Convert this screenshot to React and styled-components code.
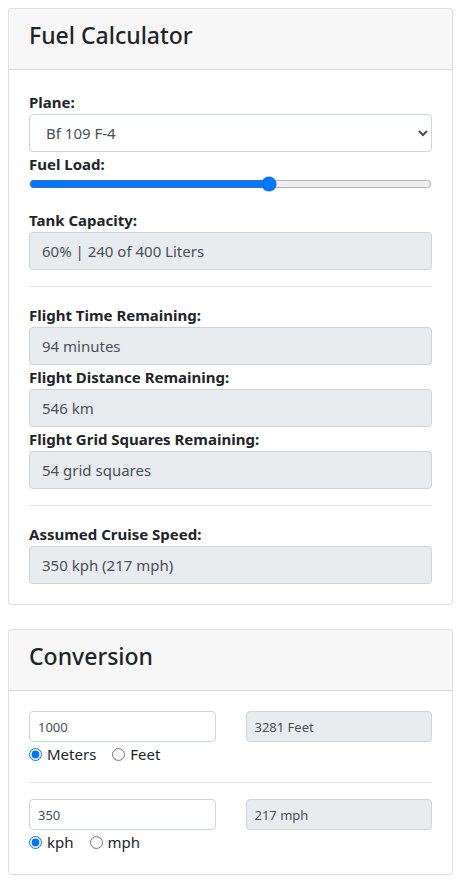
import React, { useState } from 'react';
import styled, { createGlobalStyle } from 'styled-components';

const GlobalStyle = createGlobalStyle`
  * { box-sizing: border-box; }
  body {
    margin: 0;
    background: #fff;
    color: #212529;
    font-family: "Noto Sans", "Open Sans", sans-serif;
    font-size: 15px;
    line-height: 24px;
  }
`;

const Page = styled.div`
  padding: 8px 13px 8px 8px;
`;

const Card = styled.div`
  border: 1px solid rgba(0, 0, 0, 0.125);
  border-radius: 4px;
  background: #fff;
  margin-bottom: 24px;
  &:last-child { margin-bottom: 0; }
`;

const CardHeader = styled.div`
  background: rgba(0, 0, 0, 0.03);
  border-bottom: 1px solid rgba(0, 0, 0, 0.125);
  padding: 12px 20px;
`;

const Title = styled.h4`
  margin: 0 0 7px;
  font-size: 23px;
  font-weight: 500;
  line-height: 29px;
`;

const CardBody = styled.div`
  padding: 20px;
`;

const Label = styled.label`
  display: block;
  font-weight: 700;
  line-height: 24px;
`;

const Select = styled.select`
  display: block;
  width: 100%;
  height: 38px;
  padding: 6px 12px;
  font: inherit;
  color: #495057;
  background: #fff;
  border: 1px solid #ced4da;
  border-radius: 4px;
`;

const Range = styled.input`
  display: block;
  width: 100%;
  margin: 0 0 16px;
  height: 16px;
  accent-color: #0075ff;
`;

const Field = styled.input`
  display: block;
  width: 100%;
  font-family: inherit;
  color: #495057;
  border: 1px solid #ced4da;
  border-radius: 4px;
  background: ${p => (p.readOnly ? '#e9ecef' : '#fff')};
  height: ${p => (p.$small ? '31px' : '38px')};
  padding: ${p => (p.$small ? '4px 8px' : '6px 12px')};
  font-size: ${p => (p.$small ? '13px' : '15px')};
  outline: none;
`;

const Rule = styled.hr`
  margin: 16px 0;
  border: 0;
  border-top: 1px solid rgba(0, 0, 0, 0.1);
`;

const Row = styled.div`
  display: grid;
  grid-template-columns: 1fr 1fr;
  column-gap: 30px;
  align-items: start;
`;

const Radios = styled.div`
  display: flex;
  align-items: center;
  line-height: 24px;
`;

const RadioLabel = styled.label`
  display: inline-flex;
  align-items: center;
  margin-right: 16px;
  input {
    margin: 0 5px 0 0;
    width: 13px;
    height: 13px;
    accent-color: #0075ff;
  }
`;

const readonlyFields = [
  ['Flight Time Remaining:', '94 minutes'],
  ['Flight Distance Remaining:', '546 km'],
  ['Flight Grid Squares Remaining:', '54 grid squares'],
];

const Converter = ({ value, result, units, name }) => {
  const [unit, setUnit] = useState(units[0]);
  return (
    <Row>
      <div>
        <Field $small defaultValue={value} />
        <Radios>
          {units.map(u => (
            <RadioLabel key={u}>
              <input type="radio" name={name} checked={unit === u} onChange={() => setUnit(u)} />
              {u}
            </RadioLabel>
          ))}
        </Radios>
      </div>
      <Field $small readOnly value={result} />
    </Row>
  );
};

export default function App() {
  const [fuel, setFuel] = useState(60);
  return (
    <Page>
      <GlobalStyle />
      <Card>
        <CardHeader>
          <Title>Fuel Calculator</Title>
        </CardHeader>
        <CardBody>
          <Label>Plane:</Label>
          <Select defaultValue="bf109f4">
            <option value="bf109f4">Bf 109 F-4</option>
          </Select>
          <Label>Fuel Load:</Label>
          <Range type="range" min="0" max="100" value={fuel} onChange={e => setFuel(+e.target.value)} />
          <Label>Tank Capacity:</Label>
          <Field readOnly value="60% | 240 of 400 Liters" />
          <Rule />
          {readonlyFields.map(([label, value]) => (
            <div key={label}>
              <Label>{label}</Label>
              <Field readOnly value={value} />
            </div>
          ))}
          <Rule />
          <Label>Assumed Cruise Speed:</Label>
          <Field readOnly value="350 kph (217 mph)" />
        </CardBody>
      </Card>
      <Card>
        <CardHeader>
          <Title>Conversion</Title>
        </CardHeader>
        <CardBody>
          <Converter name="alt" value="1000" result="3281 Feet" units={['Meters', 'Feet']} />
          <Rule />
          <Converter name="spd" value="350" result="217 mph" units={['kph', 'mph']} />
        </CardBody>
      </Card>
    </Page>
  );
}
